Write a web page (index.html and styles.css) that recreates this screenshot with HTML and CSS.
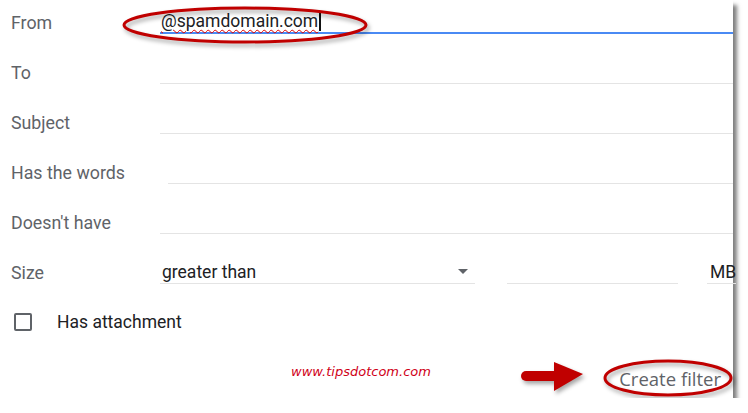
FILE: index.html
```html
<!DOCTYPE html>
<html lang="en">
<head>
    <meta charset="UTF-8">
    <meta name="viewport" content="width=device-width, initial-scale=1.0">
    <title>Create filter</title>
    <link rel="stylesheet" href="styles.css">
</head>
<body>
    <div class="card">
        <div class="row">
            <span class="label">From</span>
            <div class="field active">
                <span class="typed">@spamdomain.com</span><span class="caret"></span>
            </div>
        </div>
        <div class="row">
            <span class="label">To</span>
            <div class="field"></div>
        </div>
        <div class="row">
            <span class="label">Subject</span>
            <div class="field"></div>
        </div>
        <div class="row">
            <span class="label">Has the words</span>
            <div class="field shifted"></div>
        </div>
        <div class="row">
            <span class="label">Doesn't have</span>
            <div class="field"></div>
        </div>
        <div class="row">
            <span class="label">Size</span>
            <div class="size-fields">
                <div class="field select">
                    <span class="value">greater than</span>
                    <span class="caret-down"></span>
                </div>
                <div class="field number"></div>
                <div class="field unit"><span class="value">MB</span></div>
            </div>
        </div>
        <div class="row check-row">
            <span class="checkbox"></span>
            <span class="check-label">Has attachment</span>
        </div>
        <div class="footer">
            <span class="watermark">www.tipsdotcom.com</span>
            <button class="create-btn">Create filter</button>
        </div>

        <!-- annotations drawn over the form -->
        <svg class="mark oval-from" width="252" height="44" viewBox="0 0 252 44">
            <ellipse cx="126" cy="21" rx="121" ry="17" fill="none" stroke="#c00000" stroke-width="3"/>
        </svg>
        <svg class="mark arrow" width="70" height="36" viewBox="0 0 70 36">
            <rect x="2" y="10" width="38" height="10" rx="5" fill="#c00000"/>
            <path d="M35 1 L64 13 L35 30 Z" fill="#c00000"/>
        </svg>
        <svg class="mark oval-btn" width="136" height="42" viewBox="0 0 136 42">
            <ellipse cx="67" cy="20" rx="63" ry="17" fill="none" stroke="#c00000" stroke-width="3"/>
        </svg>
    </div>
</body>
</html>
```

FILE: styles.css
```css
body {
    margin: 0;
    padding: 0;
    background-color: #ffffff;
    font-family: Roboto, Arial, sans-serif;
}
.card {
    position: relative;
    width: 733px;
    height: 398px;
    background-color: #ffffff;
    box-shadow: 4px 5px 4px rgba(0, 0, 0, 0.5);
}
.row {
    display: flex;
    height: 50px;
    padding-top: 10px;
    box-sizing: border-box;
}
.label {
    width: 149px;
    padding-left: 11px;
    font-size: 17.8px;
    line-height: 25px;
    color: #5f6368;
    flex-shrink: 0;
}
.field {
    flex: 1;
    height: 24px;
    box-sizing: border-box;
    border-bottom: 1px solid #e4e4e4;
    font-size: 17.5px;
    line-height: 24px;
    color: #202124;
    display: flex;
    align-items: center;
}
.field.shifted {
    margin-left: 8px;
}
.field.active {
    border-bottom: 2px solid #4a8af4;
    padding-left: 1px;
}
.typed {
    text-decoration: underline wavy #e00000 1px;
    text-underline-offset: 2px;
}
.caret {
    width: 2px;
    height: 20px;
    margin-left: 1px;
    background-color: #111111;
}
.size-fields {
    flex: 1;
    display: flex;
}
.field.select {
    flex: none;
    width: 315px;
    padding-left: 2px;
    justify-content: space-between;
}
.caret-down {
    width: 0;
    height: 0;
    margin-right: 7px;
    border-left: 5px solid transparent;
    border-right: 5px solid transparent;
    border-top: 5px solid #5f6368;
}
.field.number {
    flex: none;
    width: 171px;
    margin-left: 32px;
}
.field.unit {
    margin-left: 29px;
    padding-left: 3px;
    overflow: hidden;
}
.check-row {
    align-items: flex-start;
}
.checkbox {
    width: 18px;
    height: 18px;
    margin: 3px 0 0 14px;
    box-sizing: border-box;
    border: 2px solid #5f6368;
    border-radius: 2px;
}
.check-label {
    margin-left: 25px;
    font-size: 17.5px;
    line-height: 25px;
    color: #202124;
}
.footer {
    display: flex;
    align-items: center;
    height: 48px;
    padding-left: 291px;
    padding-right: 12px;
}
.watermark {
    margin-top: -5px;
    font-family: "DejaVu Sans", Verdana, sans-serif;
    font-size: 13px;
    font-style: italic;
    color: #d00018;
}
.create-btn {
    margin-left: auto;
    margin-top: 8px;
    padding: 0;
    border: none;
    background: none;
    font-family: "Open Sans", Arial, sans-serif;
    font-size: 18.5px;
    font-weight: 500;
    color: #5f6368;
    cursor: pointer;
}
.mark {
    position: absolute;
    filter: drop-shadow(2px 3px 2px rgba(0, 0, 0, 0.35));
}
.oval-from {
    left: 119px;
    top: 4px;
}
.arrow {
    left: 519px;
    top: 361px;
}
.oval-btn {
    left: 601px;
    top: 358px;
}
```
